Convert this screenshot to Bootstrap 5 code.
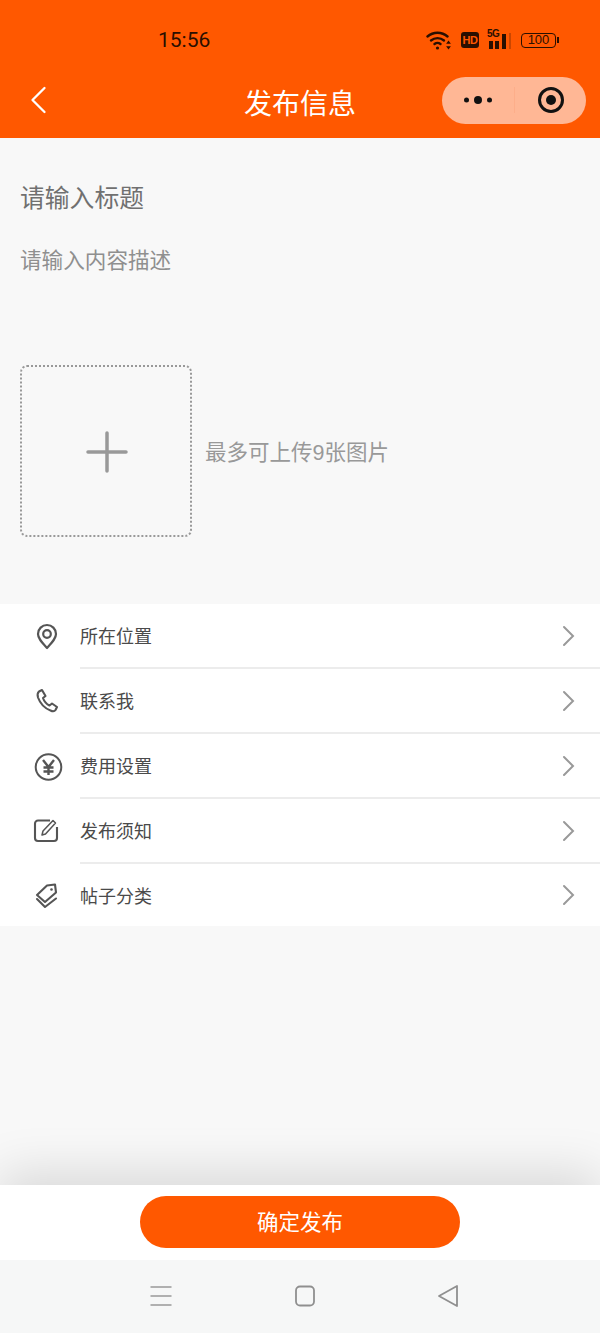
<!DOCTYPE html>
<html lang="zh-CN">
<head>
    <meta charset="UTF-8">
    <meta name="viewport" content="width=device-width, initial-scale=1.0">
    <title>发布信息</title>
    <link href="https://cdn.jsdelivr.net/npm/bootstrap@5.3.0/dist/css/bootstrap.min.css" rel="stylesheet">
    <style>
        body {
            background: #f8f8f8;
            font-family: "Liberation Sans", "Noto Sans CJK SC", sans-serif;
        }
        .app-page {
            width: 600px;
            height: 1333px;
            overflow: hidden;
        }
        .top-head {
            height: 138px;
            background: #ff5800;
            flex: none;
        }
        .status-row {
            height: 68px;
            padding: 24px 41px 0 158px;
            color: #2a0f00;
        }
        .status-time {
            font-family: "Roboto", sans-serif;
            font-size: 21px;
            line-height: 32px;
        }
        .status-icons {
            height: 32px;
        }
        .wifi-ico {
            margin-right: 1px;
        }
        .hd-tag {
            width: 18px;
            height: 16px;
            background: #2a0f00;
            color: #ff5800;
            border-radius: 3px;
            font-size: 11px;
            font-weight: 700;
            line-height: 16px;
            text-align: center;
            letter-spacing: -.5px;
        }
        .sig-wrap {
            width: 26px;
            height: 20px;
        }
        .sig-5g {
            left: 0;
            top: -1px;
            font-size: 10px;
            font-weight: 700;
            line-height: 10px;
            letter-spacing: -.6px;
        }
        .batt-box {
            width: 35px;
            height: 15px;
            border: 1.5px solid #2a0f00;
            border-radius: 4px;
            font-size: 13px;
            line-height: 12px;
            text-align: center;
        }
        .batt-tip {
            width: 2px;
            height: 6px;
            background: #2a0f00;
            margin-left: 1px;
        }
        .title-row {
            height: 70px;
            padding-left: 30px;
            padding-right: 14px;
        }
        .back-ico {
            margin-top: -7px;
        }
        .page-title {
            left: 0;
            right: 0;
            top: 16px;
            text-align: center;
            font-size: 28px;
            line-height: 42px;
            color: #fff;
        }
        .capsule {
            width: 144px;
            height: 47px;
            margin-top: -6px;
            border-radius: 24px;
            background: #ffb795;
        }
        .capsule-part {
            width: 72px;
        }
        .capsule-target {
            padding-left: 2px;
        }
        .capsule-line {
            width: 1px;
            height: 26px;
            background: #fdae8a;
        }
        .form-area {
            padding: 45px 20px 0;
            height: 466px;
        }
        .title-ph {
            font-size: 24.8px;
            line-height: 32px;
            color: #707070;
        }
        .desc-ph {
            margin-top: 31px;
            font-size: 21.6px;
            line-height: 30px;
            color: #8f8f8f;
        }
        .upload-row {
            margin-top: 89px;
        }
        .upload-box {
            width: 172px;
            height: 172px;
            padding: 2px 0 0 1px;
            border: 2px dotted #999;
            border-radius: 7px;
        }
        .upload-hint {
            margin-left: 13px;
            padding-top: 4px;
            font-size: 21.5px;
            color: #999;
        }
        .menu-list {
            background: #fff;
            flex: none;
        }
        .menu-row {
            height: 65px;
        }
        .menu-row:last-child {
            height: 62px;
        }
        .menu-ico {
            width: 80px;
            padding-left: 32px;
            flex: none;
        }
        .menu-body {
            height: 100%;
            padding-right: 25px;
            font-size: 18px;
            color: #4a4a4a;
            border-bottom: 2px solid #ececec;
        }
        .menu-row:last-child .menu-body {
            border-bottom: 0;
        }
        .menu-label {
            padding-top: 3px;
        }
        .menu-row:last-child .menu-label {
            padding-top: 5px;
        }
        .spacer-area {
            background: #f8f8f8;
        }
        .foot-bar {
            height: 75px;
            flex: none;
            box-shadow: 0 -12px 50px rgba(0, 0, 0, .13);
        }
        .publish-btn {
            width: 320px;
            height: 52px;
            margin-top: -2px;
            padding: 8px 0 4px;
            border-radius: 26px;
            border: 0;
            background: #ff5800;
            color: #fff;
            font-size: 21.5px;
        }
        .sys-nav {
            height: 73px;
            background: #f6f7f7;
            flex: none;
            padding: 0 0 2px 9px;
        }
        .sys-slot {
            width: 143.5px;
        }
    </style>
</head>
<body class="m-0">
    <div class="app-page d-flex flex-column">

        <div class="top-head">
            <div class="status-row d-flex justify-content-between align-items-start">
                <span class="status-time">15:56</span>
                <div class="status-icons d-flex align-items-center gap-2">
                    <svg class="wifi-ico" width="26" height="22" viewBox="0 0 26 22" fill="none" stroke="#2a0f00" stroke-width="2.4" stroke-linecap="round">
                        <path d="M1.5 7.5a15 15 0 0 1 20 0"/>
                        <path d="M5 11.5a10 10 0 0 1 13 0"/>
                        <path d="M8.5 15a5 5 0 0 1 6 0"/>
                        <circle cx="11.5" cy="19" r="1.6" fill="#2a0f00" stroke="none"/>
                        <path d="M22.5 11.5l-2.4 3.2h4.8zM22.5 20.5l-2.4-3.2h4.8z" fill="#2a0f00" stroke="none"/>
                    </svg>
                    <span class="hd-tag">HD</span>
                    <div class="sig-wrap position-relative">
                        <span class="sig-5g position-absolute">5G</span>
                        <svg class="d-block" width="26" height="20" viewBox="0 0 26 20" fill="#2a0f00">
                            <rect x="2" y="11" width="4" height="8"/>
                            <rect x="8" y="11" width="4" height="8"/>
                            <rect x="15" y="4" width="4" height="15"/>
                            <rect x="22" y="3" width="2" height="16" opacity=".25"/>
                        </svg>
                    </div>
                    <div class="d-flex align-items-center">
                        <span class="batt-box">100</span>
                        <span class="batt-tip"></span>
                    </div>
                </div>
            </div>
            <div class="title-row d-flex justify-content-between align-items-center position-relative">
                <svg class="back-ico" width="17" height="30" viewBox="0 0 17 30" fill="none" stroke="#fff" stroke-width="2.3" stroke-linecap="round" stroke-linejoin="round">
                    <path d="M14.5 3L2.500 15l12 12"/>
                </svg>
                <div class="page-title position-absolute">发布信息</div>
                <div class="capsule d-flex align-items-center">
                    <div class="capsule-part d-flex justify-content-center">
                        <svg width="30" height="10" viewBox="0 0 30 10" fill="#111">
                            <circle cx="3.5" cy="5" r="2.5"/>
                            <circle cx="15" cy="5" r="4"/>
                            <circle cx="26.5" cy="5" r="2.5"/>
                        </svg>
                    </div>
                    <span class="capsule-line"></span>
                    <div class="capsule-part capsule-target d-flex justify-content-center">
                        <svg width="28" height="28" viewBox="0 0 28 28">
                            <circle cx="14" cy="14" r="11.5" fill="none" stroke="#111" stroke-width="3"/>
                            <circle cx="14" cy="14" r="5" fill="#111"/>
                        </svg>
                    </div>
                </div>
            </div>
        </div>

        <div class="form-area flex-shrink-0">
            <div class="title-ph">请输入标题</div>
            <div class="desc-ph">请输入内容描述</div>
            <div class="upload-row d-flex align-items-center">
                <div class="upload-box d-flex align-items-center justify-content-center">
                    <svg width="42" height="42" viewBox="0 0 42 42" stroke="#999" stroke-width="3.5" stroke-linecap="round">
                        <path d="M21 2v38M2 21h38"/>
                    </svg>
                </div>
                <span class="upload-hint">最多可上传9张图片</span>
            </div>
        </div>

        <div class="menu-list">
            <div class="menu-row d-flex align-items-center">
                <div class="menu-ico">
                    <svg class="d-block" width="30" height="30" viewBox="0 0 30 30" fill="none" stroke="#555" stroke-width="2.2">
                        <path d="M15 26c-5-5.500-9-9.500-9-14a9 9 0 0 1 18 0c0 4.500-4 8.500-9 14z" stroke-linejoin="round"/>
                        <circle cx="15" cy="12" r="3.8"/>
                    </svg>
                </div>
                <div class="menu-body flex-grow-1 d-flex align-items-center justify-content-between">
                    <span class="menu-label">所在位置</span>
                    <svg width="14" height="22" viewBox="0 0 14 22" fill="none" stroke="#999" stroke-width="2" stroke-linecap="round"><path d="M3 2l9 9-9 9"/></svg>
                </div>
            </div>
            <div class="menu-row d-flex align-items-center">
                <div class="menu-ico">
                    <svg class="d-block" width="30" height="30" viewBox="0 0 30 30" fill="none" stroke="#555" stroke-width="2.1" stroke-linejoin="round">
                        <path d="M7 4.500l3-1.500 3.500 6-2.500 2c1 3 3.500 6 6.500 7.500l2.500-2 5 3.500-1.500 3c-1 1.500-3 1.500-5 .5C12 21 8 16 6 10.500c-.7-2.500-.2-5 1-6z"/>
                    </svg>
                </div>
                <div class="menu-body flex-grow-1 d-flex align-items-center justify-content-between">
                    <span class="menu-label">联系我</span>
                    <svg width="14" height="22" viewBox="0 0 14 22" fill="none" stroke="#999" stroke-width="2" stroke-linecap="round"><path d="M3 2l9 9-9 9"/></svg>
                </div>
            </div>
            <div class="menu-row d-flex align-items-center">
                <div class="menu-ico">
                    <svg class="d-block" width="32" height="30" viewBox="0 0 32 30" fill="none" stroke="#555" stroke-width="2">
                        <circle cx="16.5" cy="15" r="12.8"/>
                        <path d="M11 8l5.500 7 5.500-7M16.500 15v8M11.500 15.500h10M11.500 19.500h10" stroke-width="2.4"/>
                    </svg>
                </div>
                <div class="menu-body flex-grow-1 d-flex align-items-center justify-content-between">
                    <span class="menu-label">费用设置</span>
                    <svg width="14" height="22" viewBox="0 0 14 22" fill="none" stroke="#999" stroke-width="2" stroke-linecap="round"><path d="M3 2l9 9-9 9"/></svg>
                </div>
            </div>
            <div class="menu-row d-flex align-items-center">
                <div class="menu-ico">
                    <svg class="d-block" width="30" height="30" viewBox="0 0 30 30" fill="none" stroke="#555" stroke-width="2.1" stroke-linejoin="round">
                        <path d="M18 3.500H6a3 3 0 0 0-3 3V21a3 3 0 0 0 3 3h16a3 3 0 0 0 3-3V10"/>
                        <path d="M10 18l1-4L21 3.500l2.500 2.500L13.500 17z" stroke-width="1.5"/>
                    </svg>
                </div>
                <div class="menu-body flex-grow-1 d-flex align-items-center justify-content-between">
                    <span class="menu-label">发布须知</span>
                    <svg width="14" height="22" viewBox="0 0 14 22" fill="none" stroke="#999" stroke-width="2" stroke-linecap="round"><path d="M3 2l9 9-9 9"/></svg>
                </div>
            </div>
            <div class="menu-row d-flex align-items-center">
                <div class="menu-ico">
                    <svg class="d-block" width="30" height="30" viewBox="0 0 30 30" fill="none" stroke="#555" stroke-width="2.1" stroke-linejoin="round" stroke-linecap="round">
                        <path d="M5 15L15 5.500l8-1 1 8L13 22z"/>
                        <circle cx="19.5" cy="9.500" r="1.3" fill="#555" stroke="none"/>
                        <path d="M5 19l8 8 11-8.500"/>
                    </svg>
                </div>
                <div class="menu-body flex-grow-1 d-flex align-items-center justify-content-between">
                    <span class="menu-label">帖子分类</span>
                    <svg width="14" height="22" viewBox="0 0 14 22" fill="none" stroke="#999" stroke-width="2" stroke-linecap="round"><path d="M3 2l9 9-9 9"/></svg>
                </div>
            </div>
        </div>

        <div class="spacer-area flex-grow-1"></div>

        <div class="foot-bar bg-white d-flex align-items-center justify-content-center">
            <button type="button" class="publish-btn btn">确定发布</button>
        </div>

        <div class="sys-nav d-flex align-items-center justify-content-center">
            <div class="sys-slot d-flex justify-content-center">
                <svg width="24" height="24" viewBox="0 0 24 24" stroke="#999" stroke-width="1.7"><path d="M1.500 3h21M1.500 12h21M1.500 21h21"/></svg>
            </div>
            <div class="sys-slot d-flex justify-content-center">
                <svg width="24" height="24" viewBox="0 0 24 24" fill="none" stroke="#8f8f8f" stroke-width="1.8"><rect x="3" y="2.5" width="18" height="19" rx="4"/></svg>
            </div>
            <div class="sys-slot d-flex justify-content-center">
                <svg width="24" height="24" viewBox="0 0 24 24" fill="none" stroke="#8f8f8f" stroke-width="1.8" stroke-linejoin="round"><path d="M21 2v20L3 12z"/></svg>
            </div>
        </div>

    </div>

    <script src="https://cdn.jsdelivr.net/npm/bootstrap@5.3.0/dist/js/bootstrap.bundle.min.js"></script>
</body>
</html>
